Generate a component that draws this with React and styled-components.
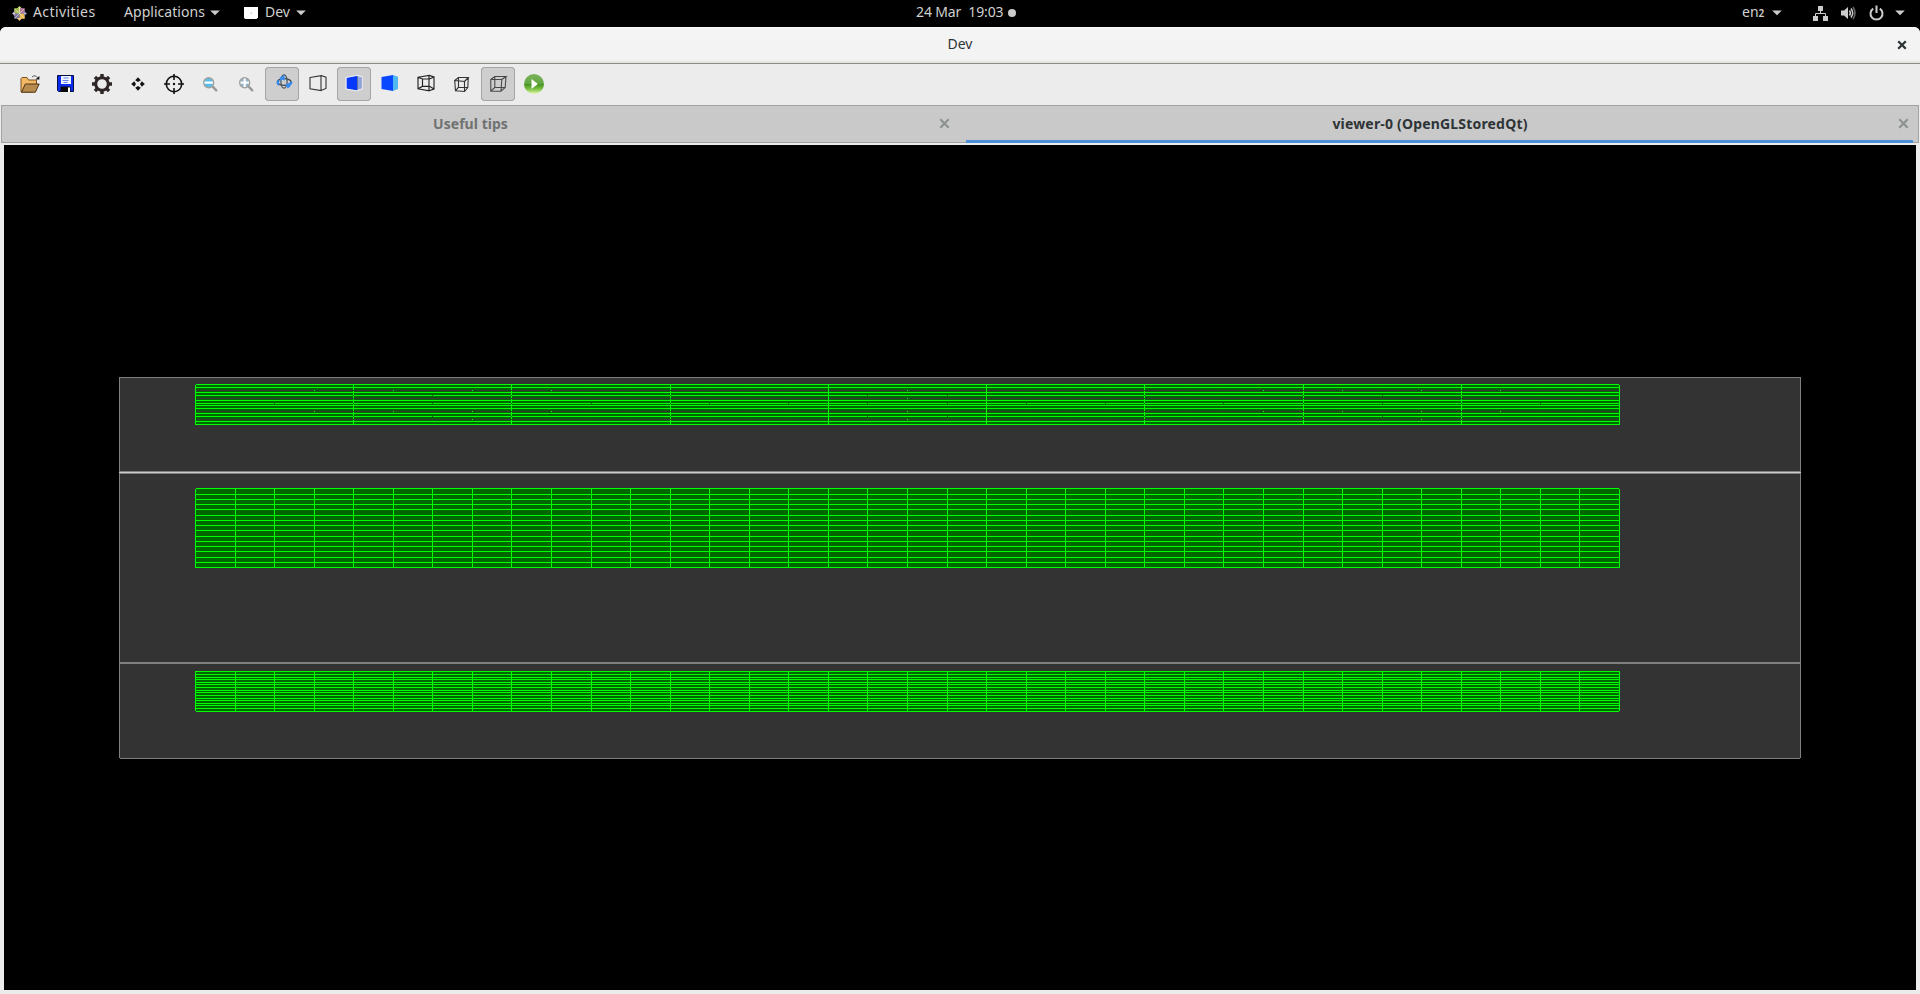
import React from 'react';
import styled, { createGlobalStyle } from 'styled-components';

const GlobalStyle = createGlobalStyle`
  html, body { margin: 0; padding: 0; background: #000; overflow: hidden; }
  * { box-sizing: border-box; }
`;

const Desktop = styled.div`
  width: 1920px;
  height: 994px;
  display: flex;
  flex-direction: column;
  background: #000;
  font-family: "Noto Sans", "Open Sans", sans-serif;
  font-size: 14px;
`;

const TopBar = styled.header`
  height: 27px;
  flex: none;
  display: grid;
  grid-template-columns: 1fr auto 1fr;
  align-items: start;
  color: #d0d0d0;
  line-height: 24px;
  white-space: pre;
`;

const BarSide = styled.div`
  display: flex;
  align-items: center;
  height: 26px;
  justify-content: ${(p) => (p.$end ? 'flex-end' : 'flex-start')};
  padding: ${(p) => (p.$end ? '0 15px 0 0' : '0 0 0 12px')};
`;

const BarItem = styled.div`
  display: flex;
  align-items: center;
  gap: ${(p) => p.$gap}px;
  margin-left: ${(p) => p.$left || 0}px;
`;

const BarLabel = styled.span`
  display: block;
  height: 26px;
  width: ${(p) => p.$w}px;
  letter-spacing: ${(p) => p.$track || 0}px;
`;

const LayoutIndex = styled.span`
  font-size: 10px;
  font-weight: 600;
`;

const Clock = styled.div`
  display: flex;
  align-items: center;
  gap: 4px;
  height: 26px;
  padding-left: 12px;
`;

const ClockLabel = styled.span`
  display: block;
  height: 26px;
  width: 88px;
  letter-spacing: -0.12px;
`;

const Dot = styled.span`
  width: 8px;
  height: 8px;
  border-radius: 50%;
  background: #ccc;
`;

const Window = styled.main`
  flex: 1;
  min-height: 0;
  display: flex;
  flex-direction: column;
  background: #ececec;
  border-radius: 6px 6px 0 0;
  overflow: hidden;
`;

const TitleBar = styled.div`
  height: 37px;
  flex: none;
  display: grid;
  grid-template-columns: 36px 1fr 36px;
  align-items: center;
  background: linear-gradient(#fff 0, #f4f4f4 1px, #f3f3f3 33px, #dfdfdc 36px);
  border-bottom: 1px solid #8b8c85;
  color: #2e3436;
  text-align: center;
`;

const Title = styled.span`
  height: 36px;
  line-height: 34px;
`;

const CloseButton = styled.button`
  display: flex;
  align-items: center;
  justify-content: center;
  padding: 0;
  border: 0;
  background: none;
  color: ${(p) => p.$color};
`;

const ToolBar = styled.div`
  height: 41px;
  flex: none;
  display: flex;
  gap: 2px;
  padding: 3px 13px 0;
`;

const ToolButton = styled.button`
  width: 34px;
  height: 34px;
  padding: 0;
  border: 0;
  border-radius: 4px;
  background: ${(p) => (p.$active ? '#cecece' : 'transparent')};
  box-shadow: ${(p) => (p.$active ? 'inset 0 0 0 1px #a5a5a5' : 'none')};

  svg { display: block; }
`;

const Tabs = styled.div`
  height: 38px;
  flex: none;
  display: flex;
  margin: 0 1px;
  border: 1px solid #a2a2a2;
  background: #c9c9c9;
  font-weight: 700;
`;

const Tab = styled.div`
  width: ${(p) => p.$w}px;
  height: 37px;
  display: flex;
  align-items: center;
  padding-right: ${(p) => p.$end}px;
  border-bottom: ${(p) => (p.$active ? '3px solid #4a90d9' : '0')};
  padding-bottom: ${(p) => (p.$active ? '0' : '2px')};
  color: ${(p) => (p.$active ? '#2e3436' : '#707272')};
`;

const TabLabel = styled.span`
  flex: 1;
  text-align: center;
  letter-spacing: ${(p) => p.$track}px;
  padding-right: ${(p) => p.$shift}px;
`;

const Viewer = styled.section`
  height: 845px;
  margin: 2px 4px 0;
  background: #000;

  svg { display: block; }
`;

const Caret = () => (
  <svg width="10" height="6" viewBox="0 0 10 6"><path d="M0.2 0.6H9.8L5 5.3Z" fill="#ccc" /></svg>
);

const Cross = ({ size, weight }) => (
  <svg width={size} height={size} viewBox="0 0 10 10">
    <path d="M1.2 1.2 8.8 8.8M8.8 1.2 1.2 8.8" stroke="currentColor" strokeWidth={weight} />
  </svg>
);

const DistroIcon = () => (
  <svg width="15" height="15" viewBox="0 0 15 15">
    <path d="M7.5 0 10 2.5 7.5 7.2 5 2.5Z" fill="#c6da62" />
    <path d="M2.2 2.2H7v4.9H2.2Z" fill="#a4bf4b" />
    <path d="M8 2.2h4.8v4.9H8Z" fill="#b377a3" />
    <path d="M2.2 7.9H7v4.9H2.2Z" fill="#78749e" />
    <path d="M8 7.9h4.8v4.9H8Z" fill="#efb850" />
    <path d="m0 7.5 3-2.7v5.4Z" fill="#b6a2cc" />
    <path d="m15 7.5-3-2.7v5.4Z" fill="#8682ac" />
    <path d="m7.5 15-2.7-3h5.4Z" fill="#f0c16b" />
    <path d="M7.5 1v13M1 7.5h13M3 3l9 9M12 3l-9 9" stroke="#eee4d2" strokeWidth=".6" />
  </svg>
);

const AppIcon = () => (
  <svg width="14" height="12" viewBox="0 0 14 12">
    <path d="M0 0H14V10.5L12.5 12H1.5L0 11Z" fill="#fff" />
    <path d="M6 6.5 7.5 5 8.5 7Z" fill="#ccc" />
  </svg>
);

const NetworkIcon = () => (
  <svg width="15" height="15" viewBox="0 0 15 15">
    <path d="M5 0h5v5H5ZM0 10h5v5H0ZM10 10h5v5h-5Z" fill="#ccc" />
    <path d="M7.5 5v2.5M2.5 10V7.5h10V10" fill="none" stroke="#ccc" />
  </svg>
);

const VolumeIcon = () => (
  <svg width="15" height="14" viewBox="0 0 15 14">
    <path d="M0 4.5h3L7 1v12L3 9.5H0Z" fill="#ccc" />
    <path d="M8.5 4.5q1.8 2.5 0 5M10 2.5q3.4 4.5 0 9" fill="none" stroke="#ccc" strokeWidth="1.5" />
    <path d="M12 1q4 6 0 12" fill="none" stroke="#666" strokeWidth="1.5" />
  </svg>
);

const PowerIcon = () => (
  <svg width="15" height="16" viewBox="0 0 15 16">
    <path d="M4.2 3.6a6 6 0 1 0 6.6 0" fill="none" stroke="#ccc" strokeWidth="2" />
    <path d="M7.5 0.5V8" stroke="#ccc" strokeWidth="2" />
  </svg>
);

const OpenIcon = () => (
  <>
    <path d="M8 25V11.5l1-1h5l1.5 2.5h8V17L20 25Z" fill="#f2b866" stroke="#7d5420" />
    <path d="M8.5 25.2 12.3 17h13.9l-3.8 8.2Z" fill="#b78a4e" stroke="#4d3517" />
    <path d="M19 10q3-2.7 5.5.7" fill="none" stroke="#555" />
    <path d="M26.4 9v3.5h-4Z" fill="#111" />
  </>
);

const SaveIcon = () => (
  <>
    <path d="M8.5 8.5H24.5V24.5H9.5L8.5 23.5Z" fill="#0a2cf0" stroke="#061040" />
    <path d="M12 9h10v8H12Z" fill="#eef3ff" />
    <path d="M14.5 11h5M13.5 13.5h6M14.5 15.5h4" stroke="#6683e8" />
    <path d="M11.5 19.5h10V25h-10Z" fill="#080808" />
    <path d="M19 20.5h2V25h-2Z" fill="#fff" />
  </>
);

const GearIcon = () => (
  <g stroke="#2e2626" fill="none">
    <circle cx="17" cy="17" r="6.3" strokeWidth="3" />
    {[0, 45, 90, 135, 180, 225, 270, 315].map((a) => (
      <path key={a} d="M17 10.5V7" strokeWidth="3.4" transform={`rotate(${a} 17 17)`} />
    ))}
  </g>
);

const MoveIcon = () => (
  <g fill="#111">
    {[0, 90, 180, 270].map((a) => (
      <path key={a} d="M17 10.2 19.8 13.2 17 15 14.2 13.2Z" transform={`rotate(${a} 17 17)`} />
    ))}
  </g>
);

const TargetIcon = () => (
  <g stroke="#111" fill="none" strokeWidth="1.6">
    <circle cx="17" cy="17" r="7.7" />
    <path d="M17 7v6M17 21v6M7 17h6M21 17h6" />
    <circle cx="17" cy="17" r="1.2" fill="#111" stroke="none" />
  </g>
);

const LensIcon = ({ plus }) => (
  <>
    <path d="m19.7 19.7 3.6 3.6" stroke="#999" strokeWidth="2.4" strokeLinecap="round" />
    <circle cx="15.7" cy="15.7" r="5" fill={plus ? '#8fb4c8' : '#58bde9'} stroke="#a3a29e" strokeWidth="1.4" />
    <path d="M11.5 15.7h8.4" stroke="#fff" strokeWidth="2.2" />
    {plus && <path d="M15.7 11.5v8.4" stroke="#fff" strokeWidth="2.2" />}
  </>
);

const RotateIcon = () => (
  <g fill="none">
    <ellipse cx="19.2" cy="15" rx="6.8" ry="3.4" stroke="#3e464e" strokeWidth="1.4" />
    <ellipse cx="19" cy="14.5" rx="3.1" ry="6.7" stroke="#4b5560" strokeWidth="1.3" />
    <path d="M14 17.8q-2.8-2 0-4.2M22.6 18.2q3.6-1 3.8-3.4" stroke="#2f86ef" strokeWidth="2.2" />
    <path d="m14.6 10.5 5-2.6.2 5.8-2.6-1.5-1.4 2.3Z" fill="#388df0" />
    <path d="m20.3 17.5 4.8-2.1.4 4.2-2.8 1.8Z" fill="#388df0" />
  </g>
);

const HiddenCubeIcon = () => (
  <path d="M9 10.5 20 8.6V23.6L9 21.8ZM20 8.6 25 10.2V21.5L20 23.6" fill="none" stroke="#333" strokeWidth="1.1" />
);

const SolidCubeIcon = () => (
  <>
    <path d="M9.2 10.7 20 8.6 25 10.2V21.5L20 23.6 9.2 21.8Z" stroke="#e7e9f5" strokeWidth="1.6" />
    <path d="M9.7 11 20 9V23.2L9.7 21.5Z" fill="#0538fb" />
    <path d="M20.3 9.3 24.6 10.5V21.3L20.3 23Z" fill="#8fa3dd" />
  </>
);

const ShadedCubeIcon = () => (
  <>
    <path d="M8.5 10 20 8V24L8.5 22Z" fill="#0947ff" />
    <path d="M20 8 25 9.7V22L20 24Z" fill="#4db9ee" />
  </>
);

const PerspectiveCubeIcon = () => (
  <path
    d="M9 10.2 20 8.4V23.8L9 21.8ZM20 8.4 25 10V22L20 23.8M9 10.2 13.5 12H20.5L25 10M13.5 12V19.3L9 21.8M13.5 19.3H20.5L25 22"
    fill="none" stroke="#222" strokeWidth="1.15"
  />
);

const OrthoCubeIcon = () => (
  <path
    d="M9.7 13.5 19.5 14.5V24.5L10.5 23.8ZM9.7 13.5 13.5 10.5H23.3L19.5 14.5M23.3 10.5 22.8 20.5 19.5 24.5M13.5 10.5V20.2L10.5 23.8M13.5 20.2 22.8 20.5"
    fill="none" stroke="#333" strokeWidth="1.1"
  />
);

const WireCubeIcon = () => (
  <path
    d="M9.8 12.5 20.8 12.5 20 24.2 9.8 24.2ZM9.8 12.5 13.8 9.5H25L20.8 12.5M25 9.5 24.2 20.5 20 24.2M13.8 9.5V20.5L9.8 24.2M13.8 20.5H24.2"
    fill="none" stroke="#484848" strokeWidth="1.1"
  />
);

const RunIcon = () => (
  <>
    <defs>
      <linearGradient id="runFill" x1="0" y1="0" x2="0" y2="1">
        <stop offset="0" stopColor="#7db35c" />
        <stop offset="0.48" stopColor="#62a644" />
        <stop offset="0.52" stopColor="#469222" />
        <stop offset="0.75" stopColor="#7cc046" />
        <stop offset="1" stopColor="#e8fab0" />
      </linearGradient>
    </defs>
    <circle cx="17" cy="17" r="10" fill="url(#runFill)" />
    <path d="M14.5 12 20.8 17 14.5 22Z" fill="#fff" />
  </>
);

const TOOLS = [
  { name: 'Open', icon: <OpenIcon /> },
  { name: 'Save', icon: <SaveIcon /> },
  { name: 'Properties', icon: <GearIcon /> },
  { name: 'Move', icon: <MoveIcon /> },
  { name: 'Pick', icon: <TargetIcon /> },
  { name: 'Zoom out', icon: <LensIcon /> },
  { name: 'Zoom in', icon: <LensIcon plus /> },
  { name: 'Rotate', icon: <RotateIcon />, active: true },
  { name: 'Hidden line removal', icon: <HiddenCubeIcon /> },
  { name: 'Hidden line and surface removal', icon: <SolidCubeIcon />, active: true },
  { name: 'Surfaces', icon: <ShadedCubeIcon /> },
  { name: 'Perspective', icon: <PerspectiveCubeIcon /> },
  { name: 'Orthographic', icon: <OrthoCubeIcon /> },
  { name: 'Wireframe', icon: <WireCubeIcon />, active: true },
  { name: 'Run', icon: <RunIcon /> },
];

const LEFT = 195;
const RIGHT = 1619;
const CELLS = 36;
const columnX = (i) => Math.round(LEFT + ((RIGHT - LEFT) * i) / CELLS);
const columns = Array.from({ length: CELLS - 1 }, (_, i) => i + 1);

const LINE = '#00ff00';
const FILL = '#006600';

const STRIPS = {
  upper: [384, 387, 392, 395, 400, 403, 405, 408, 413, 416, 421, 424],
  middle: [488, 494, 499, 504, 509, 515, 520, 525, 530, 536, 541, 546, 551, 557, 562, 567],
  lower: [671, 674, 677, 679, 682, 684, 687, 690, 692, 695, 698, 700, 703, 705, 708, 711],
};

// Rows of the upper strip where the layers behind show through.
const GAPS = [390, 398, 411, 419];
const SPARKS = {
  390: [3, 5, 7, 9, 18, 27, 29, 31, 33],
  398: [18],
  411: [3, 5, 7, 9, 18, 27, 29, 31, 33],
  419: [7, 18, 31],
};
const NOTCHES = {
  395: [6, 17, 19, 30],
  403: [2, 6, 10, 13, 15, 17, 19, 21, 23, 26, 30, 34],
  416: [6, 17, 19, 30],
};

const Px = ({ x, y, w = 1, h = 1, c }) => <rect x={x} y={y} width={w} height={h} fill={c} />;

const Rows = ({ rows }) =>
  rows.map((y, i) => {
    const inset = (i === 0 && y < 600) || y === 711 ? 1 : 0;
    return <Px key={y} x={LEFT + inset} y={y} w={RIGHT - LEFT + 1 - 2 * inset} c={LINE} />;
  });

const Strip = ({ rows, every = 1 }) => {
  const top = rows[0];
  const bottom = rows[rows.length - 1];
  const start = top > 600 ? top : top + 1;
  const end = top > 600 ? bottom : bottom + 1;
  const upper = top === 384;
  return (
    <g>
      <Px x={LEFT} y={start} w={RIGHT - LEFT + 1} h={end - start} c={FILL} />
      {upper && GAPS.map((y) => (
        <g key={y}>
          <Px x={LEFT} y={y - 1} w={RIGHT - LEFT} c="#0d590d" />
          <Px x={LEFT} y={y} w={RIGHT - LEFT} c="#333833" />
          {columns.map((i) => (
            <Px key={i} x={columnX(i)} y={y} c={SPARKS[y].includes(i) ? LINE : '#1a501a'} />
          ))}
        </g>
      ))}
      <Rows rows={rows} />
      {columns.filter((i) => i % every === 0).map((i) => (
        <Px key={i} x={columnX(i)} y={start} h={end - start} c={LINE} />
      ))}
      {upper && columns.filter((i) => i % 4 === 0 && i !== 16 && i !== 20).map((i) =>
        [390, 395, 398, 403, 411, 416, 419].map((y) => (
          <Px key={`${i}-${y}`} x={columnX(i)} y={y} c={FILL} />
        ))
      )}
      {upper && Object.entries(NOTCHES).map(([y, list]) =>
        list.map((i) => <Px key={`${y}-${i}`} x={columnX(i)} y={Number(y)} c={FILL} />)
      )}
      <Px x={LEFT} y={start} h={end - start} c={LINE} />
      <Px x={RIGHT} y={start} h={end - start} c={LINE} />
    </g>
  );
};

const Scene = () => (
  <svg width="1912" height="845" viewBox="4 145 1912 845" shapeRendering="crispEdges">
    <Px x={119} y={377} w={1682} h={381} c="#808080" />
    <Px x={120} y={758} w={1680} c="#808080" />
    <Px x={120} y={378} w={1680} h={380} c="#333333" />
    <Px x={119} y={471} w={1682} h={3} c="#808080" />
    <Px x={119} y={472} w={1682} c="#cccccc" />
    <Px x={119} y={662} w={1682} h={2} c="#808080" />
    <Strip rows={STRIPS.upper} every={4} />
    <Strip rows={STRIPS.middle} />
    <Strip rows={STRIPS.lower} />
  </svg>
);

export default function App() {
  return (
    <Desktop>
      <GlobalStyle />
      <TopBar>
        <BarSide>
          <BarItem $gap={6}>
            <DistroIcon />
            <BarLabel $w={63} $track={0.42}>Activities</BarLabel>
          </BarItem>
          <BarItem $gap={6} $left={28}>
            <BarLabel $w={80} $track={0.04}>Applications</BarLabel>
            <Caret />
          </BarItem>
          <BarItem $gap={7} $left={24}>
            <AppIcon />
            <BarLabel $w={24}>Dev</BarLabel>
            <Caret />
          </BarItem>
        </BarSide>
        <Clock>
          <ClockLabel>24 Mar  19:03</ClockLabel>
          <Dot />
        </Clock>
        <BarSide $end>
          <BarItem $gap={7}>
            <BarLabel $w={23}>en<LayoutIndex>2</LayoutIndex></BarLabel>
            <Caret />
          </BarItem>
          <BarItem $gap={13} $left={31}>
            <NetworkIcon />
            <VolumeIcon />
            <BarItem $gap={11}>
              <PowerIcon />
              <Caret />
            </BarItem>
          </BarItem>
        </BarSide>
      </TopBar>
      <Window>
        <TitleBar>
          <span />
          <Title>Dev</Title>
          <CloseButton $color="#2e3436" aria-label="Close window"><Cross size={10} weight={2.3} /></CloseButton>
        </TitleBar>
        <ToolBar>
          {TOOLS.map((tool) => (
            <ToolButton key={tool.name} $active={tool.active} aria-label={tool.name}>
              <svg width="34" height="34" viewBox="0 0 34 34">{tool.icon}</svg>
            </ToolButton>
          ))}
        </ToolBar>
        <Tabs>
          <Tab $w={964} $end={16}>
            <TabLabel $track={0.04} $shift={0}>Useful tips</TabLabel>
            <CloseButton $color="#8e9191" aria-label="Close tab"><Cross size={11} weight={2} /></CloseButton>
          </Tab>
          <Tab $w={947} $end={4} $active>
            <TabLabel $track={0.18} $shift={4}>viewer-0 (OpenGLStoredQt)</TabLabel>
            <CloseButton $color="#8e9191" aria-label="Close tab"><Cross size={11} weight={2} /></CloseButton>
          </Tab>
        </Tabs>
        <Viewer><Scene /></Viewer>
      </Window>
    </Desktop>
  );
}
